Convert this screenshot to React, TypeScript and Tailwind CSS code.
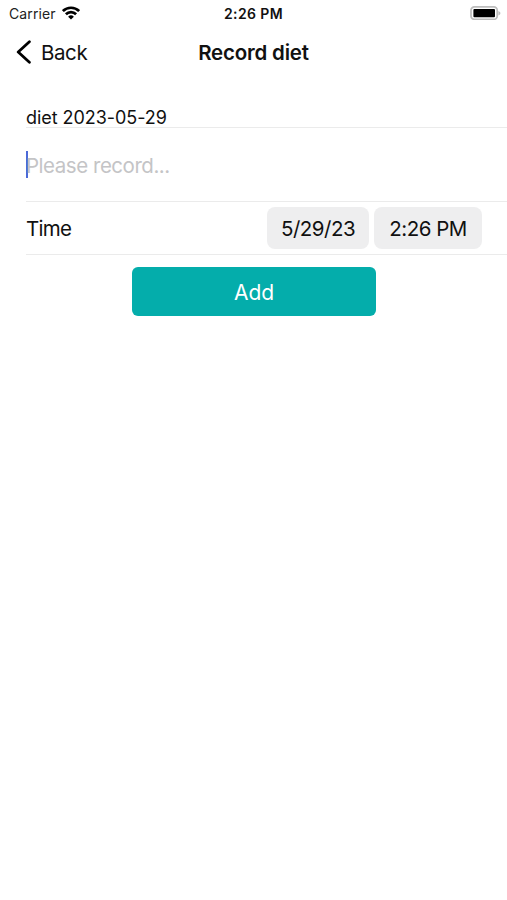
import type { ReactNode } from "react";

function StatusBar() {
  return (
    <div className="grid h-[27px] grid-cols-[1fr_auto_1fr] items-center pl-[9px] pr-[7px]">
      <div className="flex items-center gap-[6px]">
        <span className="text-[14px] leading-[18px] tracking-[0.1px] text-[#222]">Carrier</span>
        <svg className="-mt-[2px] h-[14px] w-[18px]" viewBox="0 0 18 14" fill="none" stroke="#000" strokeWidth="2.7">
          <path d="M0.9 5.1a11.5 11.5 0 0 1 16.2 0" />
          <path d="M3.9 8.3a7.2 7.2 0 0 1 10.2 0" />
          <path d="M9 13.6L6.1 10.7a4.1 4.1 0 0 1 5.8 0z" fill="#000" stroke="none" />
        </svg>
      </div>
      <span className="pr-[2px] text-center text-[14px] font-semibold leading-[18px] tracking-[0.4px] text-[#111]">
        2:26 PM
      </span>
      <svg className="-mr-px -mt-px h-[14px] w-[31px] justify-self-end" viewBox="0 0 31 14">
        <rect x="1" y="0.9" width="26.2" height="12.4" rx="3.4" fill="#fff" stroke="#bdbdbd" strokeWidth="1.7" />
        <rect x="3.4" y="3" width="21.6" height="8.3" rx="1" fill="#000" />
        <path d="M28.4 5v4.4c1.2-.4 2-1.3 2-2.2s-.8-1.8-2-2.2z" fill="#bdbdbd" />
      </svg>
    </div>
  );
}

function NavBar() {
  return (
    <div className="grid h-[51px] grid-cols-3 items-center px-4">
      <button className="flex items-center gap-[10px] text-[20.5px] tracking-[-0.4px] text-[#111]">
        <svg className="-mt-px h-6 w-[15px]" viewBox="0 0 15 24" fill="none" stroke="#000" strokeWidth="2.8" strokeLinecap="round" strokeLinejoin="round">
          <path d="M13.4 1.8L2.2 12l11.2 10.2" />
        </svg>
        <span className="pt-[2px]">Back</span>
      </button>
      <h1 className="whitespace-nowrap pt-[2px] text-center text-[20.5px] font-semibold tracking-[-0.2px] text-[#111]">
        Record diet
      </h1>
    </div>
  );
}

function DateChip({ children }: { children: ReactNode }) {
  return (
    <button className="h-[42px] rounded-lg bg-[#eeeeef] pt-[3px] text-[20.5px] tracking-[-0.5px] text-[#111]">
      {children}
    </button>
  );
}

export default function App() {
  return (
    <div className="min-h-screen bg-white font-['Inter',sans-serif]">
      <StatusBar />
      <NavBar />

      <div className="ml-[26px] pt-[27px]">
        <div className="flex h-[23px] items-center border-b border-[#ebebeb] pt-[3px] text-[18px] leading-[22px] tracking-[-0.05px] text-[#111]">
          diet 2023-05-29
        </div>

        <div className="flex h-[74px] items-center border-b border-[#ebebeb]">
          <span className="h-[27px] w-[2px] bg-[#4b69d8]" />
          <span className="-ml-[2px] pt-[3px] text-[20.5px] tracking-[-0.47px] text-[#c4c4c6]">Please record...</span>
        </div>

        <div className="flex h-[53px] items-center justify-between border-b border-[#ebebeb] pr-[25px]">
          <span className="pt-[2px] text-[20.5px] tracking-[-0.7px] text-[#111]">Time</span>
          <div className="grid grid-cols-[102px_108px] gap-[5px]">
            <DateChip>5/29/23</DateChip>
            <DateChip>2:26 PM</DateChip>
          </div>
        </div>
      </div>

      <div className="pl-[132px] pt-3">
        <button className="h-[49px] w-[244px] rounded-md bg-[#04adab] pt-[2px] text-[21px] tracking-[-0.1px] text-white">
          Add
        </button>
      </div>
    </div>
  );
}
